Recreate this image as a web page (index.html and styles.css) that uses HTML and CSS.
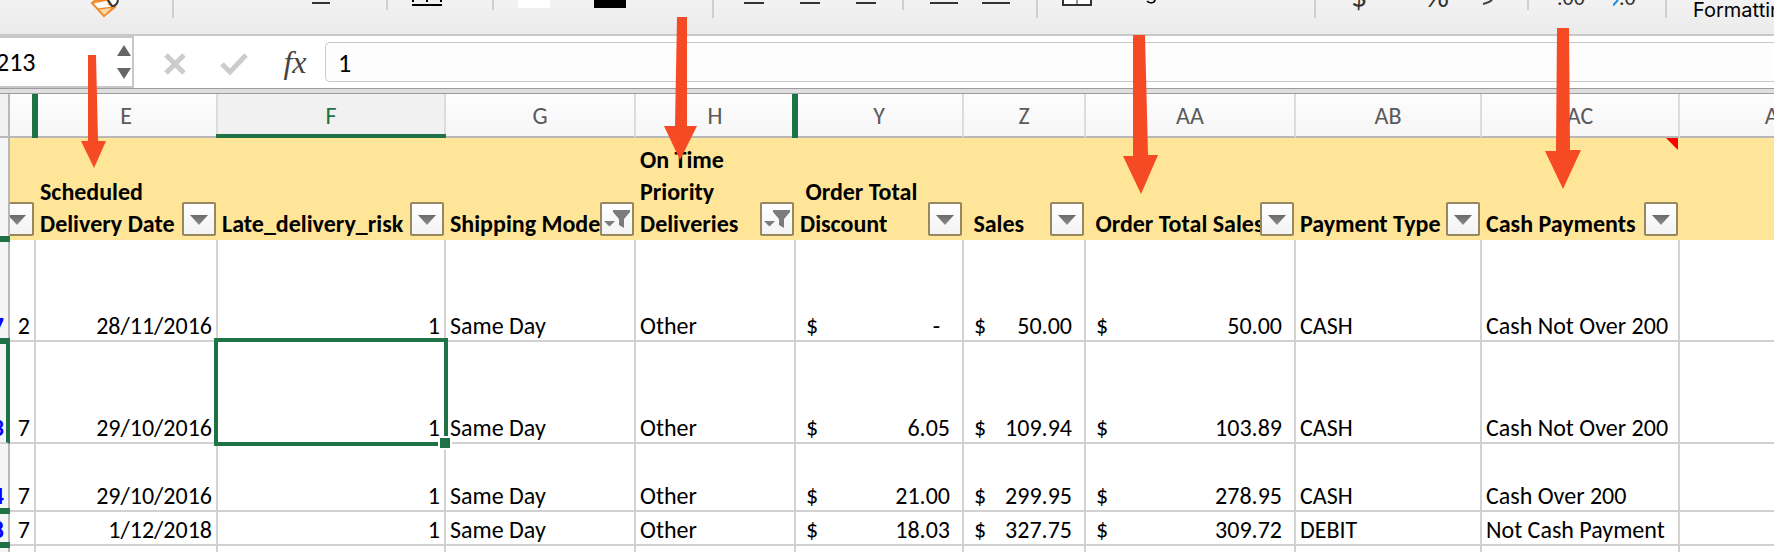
FILE: index.html
```html
<!DOCTYPE html>
<html lang="en">
<head>
<meta charset="utf-8">
<title>Delivery orders</title>
<link rel="stylesheet" href="styles.css">
</head>
<body>
<svg class="defs" aria-hidden="true">
  <defs>
    <linearGradient id="grey" x1="0" y1="0" x2="0" y2="1"><stop offset="0" stop-color="#6a6a6a"/><stop offset="1" stop-color="#8c8c8c"/></linearGradient>
    <symbol id="drop" viewBox="0 0 30 30"><path d="M6 11H24L15 21Z" fill="url(#grey)"/></symbol>
    <symbol id="funnel" viewBox="0 0 30 30"><path d="M2 17H13L7.500 22.500ZM11 6H28V8L22 15V24L17 21V15L11 8Z" fill="#7c7c7c"/></symbol>
  </defs>
</svg>
<div class="app">
  <div class="toolbar" role="toolbar" aria-label="Home">
    <button class="tool brush" aria-label="Format painter"><svg width="30" height="18" viewBox="0 0 30 18"><path d="M2 3L14 16L25 7L17 0H6Z" fill="#fff" stroke="#f08a2c" stroke-width="2"/><path d="M8 9L14 16L24 7Z" fill="#fbd9a0" stroke="#f08a2c" stroke-width="1.500"/><path d="M2 3L17 0L20 6" fill="none" stroke="#f08a2c" stroke-width="1.500"/><path d="M18 0L22 6Q27 6 28 0" fill="#fff" stroke="#333" stroke-width="2"/></svg></button>
    <span class="sep"></span>
    <button class="tool" aria-label="Underline"><span class="line short"></span></button>
    <span class="sep half"></span>
    <button class="tool" aria-label="Borders"><svg width="30" height="6" viewBox="0 0 30 6"><path d="M0 4H30V6H0Z"/><path d="M0 0H2V2H0ZM14 0H16V2H14ZM28 0H30V2H28Z"/></svg></button>
    <span class="sep half"></span>
    <button class="tool swatch fill" aria-label="Fill colour"></button>
    <button class="tool swatch ink" aria-label="Font colour"></button>
    <span class="sep"></span>
    <button class="tool" aria-label="Align left"><span class="line"></span></button>
    <button class="tool" aria-label="Align centre"><span class="line"></span></button>
    <button class="tool" aria-label="Align right"><span class="line"></span></button>
    <span class="sep half"></span>
    <button class="tool" aria-label="Decrease indent"><span class="line long"></span></button>
    <button class="tool" aria-label="Increase indent"><span class="line long"></span></button>
    <span class="sep"></span>
    <button class="tool" aria-label="Merge cells"><svg width="30" height="6" viewBox="0 0 30 6"><path d="M1 0V5H29V0" fill="#fff" stroke="#333" stroke-width="2"/><path d="M15 0V4" stroke="#333"/></svg></button>
    <button class="tool label merge">Merge &amp; Center</button>
    <span class="sep"></span>
    <button class="tool glyph">$</button>
    <button class="tool glyph">%</button>
    <button class="tool" aria-label="Comma style"><svg width="12" height="5" viewBox="0 0 12 5"><path d="M10 0Q8 2 1 4" fill="none" stroke="#444" stroke-width="2"/></svg></button>
    <span class="sep half"></span>
    <button class="tool decimals">.00</button>
    <button class="tool decimals"><svg width="6" height="6" viewBox="0 0 6 6"><path d="M0 5.500L5 0" stroke="#1d8fd8" stroke-width="2"/></svg>.0</button>
    <span class="sep"></span>
    <button class="tool label">Formatting</button>
  </div>

  <div class="formula">
    <div class="namebox">
      <input class="cellname" aria-label="Name box" value="213">
      <span class="steps">
        <button aria-label="Previous"><svg width="14" height="12" viewBox="0 0 14 12"><path d="M0 11L7 0L14 11Z" fill="#666"/></svg></button>
        <button aria-label="Next"><svg width="14" height="12" viewBox="0 0 14 12"><path d="M0 1H14L7 12Z" fill="#666"/></svg></button>
      </span>
    </div>
    <button class="cancel" aria-label="Cancel"><svg width="22" height="22" viewBox="0 0 22 22"><path d="M2 2L20 20M20 2L2 20" stroke="#ccc" stroke-width="5"/></svg></button>
    <button class="enter" aria-label="Enter"><svg width="28" height="22" viewBox="0 0 28 22"><path d="M2 11L10 19L26 2" fill="none" stroke="#ccc" stroke-width="5"/></svg></button>
    <button class="fx" aria-label="Insert function">fx</button>
    <input class="entry" aria-label="Formula" value="1">
  </div>
  <div class="divider"></div>

  <table class="sheet">
    <colgroup><col class="c-n"><col class="c-d"><col class="c-e"><col class="c-f"><col class="c-g"><col class="c-h"><col class="c-y"><col class="c-z"><col class="c-aa"><col class="c-ab"><col class="c-ac"><col class="c-ad"></colgroup>
    <thead>
      <tr class="letters">
        <th class="corner"></th><th class="break"></th><th>E</th><th class="current">F</th><th>G</th><th class="break">H</th><th>Y</th><th>Z</th><th>AA</th><th>AB</th><th>AC</th><th>AD</th>
      </tr>
    </thead>
    <tbody>
      <tr class="titles">
        <th class="num mark"></th>
        <th><div class="clip"><button class="filter" aria-label="Filter D"><svg><use href="#drop"/></svg></button></div></th>
        <th>Scheduled<br>Delivery Date<button class="filter" aria-label="Filter E"><svg><use href="#drop"/></svg></button></th>
        <th>Late_delivery_risk<button class="filter" aria-label="Filter F"><svg><use href="#drop"/></svg></button></th>
        <th>Shipping Mode<button class="filter" aria-label="Filter G"><svg><use href="#funnel"/></svg></button></th>
        <th>On Time<br>Priority<br>Deliveries<button class="filter" aria-label="Filter H"><svg><use href="#funnel"/></svg></button></th>
        <th>&nbsp;Order Total<br>Discount<button class="filter" aria-label="Filter Y"><svg><use href="#drop"/></svg></button></th>
        <th>&nbsp;Sales<button class="filter" aria-label="Filter Z"><svg><use href="#drop"/></svg></button></th>
        <th>&nbsp;Order Total Sales<button class="filter" aria-label="Filter AA"><svg><use href="#drop"/></svg></button></th>
        <th>Payment Type<button class="filter" aria-label="Filter AB"><svg><use href="#drop"/></svg></button></th>
        <th class="noted">Cash Payments<button class="filter" aria-label="Filter AC"><svg><use href="#drop"/></svg></button></th>
        <th></th>
      </tr>
      <tr class="tall">
        <th class="num mark"><span>7</span></th><td class="r">2</td><td class="r">28/11/2016</td><td class="r">1</td><td>Same Day</td><td>Other</td>
        <td><div class="money"><span>$</span><span class="nil">-</span></div></td><td><div class="money"><span>$</span><span>50.00</span></div></td><td><div class="money"><span>$</span><span>50.00</span></div></td><td>CASH</td><td>Cash Not Over 200</td><td></td>
      </tr>
      <tr class="tall">
        <th class="num current"><span>3</span></th><td class="r">7</td><td class="r">29/10/2016</td><td class="r selected">1<i class="frame"></i><i class="handle"></i></td><td>Same Day</td><td>Other</td>
        <td><div class="money"><span>$</span><span>6.05</span></div></td><td><div class="money"><span>$</span><span>109.94</span></div></td><td><div class="money"><span>$</span><span>103.89</span></div></td><td>CASH</td><td>Cash Not Over 200</td><td></td>
      </tr>
      <tr class="medium">
        <th class="num mark"><span>4</span></th><td class="r">7</td><td class="r">29/10/2016</td><td class="r">1</td><td>Same Day</td><td>Other</td>
        <td><div class="money"><span>$</span><span>21.00</span></div></td><td><div class="money"><span>$</span><span>299.95</span></div></td><td><div class="money"><span>$</span><span>278.95</span></div></td><td>CASH</td><td>Cash Over 200</td><td></td>
      </tr>
      <tr>
        <th class="num mark"><span>8</span></th><td class="r">7</td><td class="r">1/12/2018</td><td class="r">1</td><td>Same Day</td><td>Other</td>
        <td><div class="money"><span>$</span><span>18.03</span></div></td><td><div class="money"><span>$</span><span>327.75</span></div></td><td><div class="money"><span>$</span><span>309.72</span></div></td><td>DEBIT</td><td>Not Cash Payment</td><td></td>
      </tr>
      <tr>
        <th class="num"></th><td></td><td></td><td></td><td></td><td></td><td></td><td></td><td></td><td></td><td></td><td></td>
      </tr>
    </tbody>
  </table>

  <svg class="arrows" width="1774" height="552" viewBox="0 0 1774 552" aria-hidden="true">
    <path d="M88 55H96L98 141H106L94 168L81 141H88Z"/>
    <path d="M677 17H687V126H697L680 160L664 126H675Z"/>
    <path d="M1133 35H1145L1148 155H1158L1141 194L1123 156H1133Z"/>
    <path d="M1557 28H1569L1570 150H1581L1563 189L1545 151H1556Z"/>
  </svg>
</div>
</body>
</html>
```

FILE: styles.css
```css
* { box-sizing: border-box; }
body { margin: 0; background: #fff; color: #000; font-family: Carlito, Lato, sans-serif; font-size: 24px; }
button { padding: 0; border: 0; background: none; color: inherit; font: inherit; display: block; }
svg { display: block; }
.defs { position: absolute; width: 0; height: 0; }
.app { position: relative; height: 100vh; overflow: hidden; }

.toolbar {
  display: grid;
  grid-template-columns: 82px 140px 74px 26px 80px 26px 76px 118px 32px 56px 56px 46px 28px 52px 54px 26px 46px 206px 37px 75px 56px 45px 30px 56px 52px 28px 120px;
  align-items: start;
  justify-items: start;
  height: 36px;
  padding-left: 90px;
  overflow: hidden;
  background: linear-gradient(#f2f2f2, #ebebeb);
  border-bottom: 2px solid #c8c8c8;
}
.sep { width: 2px; height: 18px; background: #cfcfcf; }
.sep.half { height: 10px; }
.line { display: block; width: 20px; height: 4px; border-bottom: 2px solid #333; }
.line.short { width: 18px; }
.line.long { width: 28px; }
.swatch { width: 32px; height: 8px; }
.fill { background: #fff; }
.ink { background: #000; }
.label { font-family: Inter, sans-serif; font-size: 20px; line-height: 20px; white-space: nowrap; }
.label.merge { margin-top: -18px; }
.glyph { margin-top: -19px; color: #333; font-size: 32px; line-height: 32px; }
.decimals { display: flex; align-items: flex-end; margin-top: -14px; color: #333; font-size: 22px; line-height: 24px; }
.decimals svg { margin-bottom: 4px; }

.formula { display: flex; align-items: center; height: 52px; background: #fff; }
.divider { height: 6px; border: solid #9c9c9c; border-width: 1px 0; background: #dedede; }
.namebox { display: flex; align-items: center; justify-content: space-between; width: 134px; height: 52px; padding-right: 1px; border: 2px solid #c8c8c8; border-left: 0; }
.cellname { width: 90px; margin-left: -4px; padding: 0; border: 0; background: none; font: inherit; font-size: 26px; }
.steps { display: grid; gap: 10px; }
.cancel { margin-left: 30px; padding-top: 4px; }
.enter { margin-left: 34px; padding-top: 4px; }
.fx { width: 30px; margin-left: 32px; color: #444; font: italic 32px/36px "Liberation Serif", serif; }
.entry { flex: 1; min-width: 0; height: 40px; margin-left: 15px; padding: 2px 12px 0; border: 1px solid #c8c8c8; border-right: 0; border-radius: 5px 0 0 5px; background: #fdfdfd; font: inherit; font-size: 26px; }

.sheet { width: 1880px; table-layout: fixed; border-collapse: separate; border-spacing: 0; line-height: 28px; }
.c-n { width: 10px; }
.c-d { width: 26px; }
.c-e { width: 182px; }
.c-f { width: 228px; }
.c-g { width: 190px; }
.c-h { width: 160px; }
.c-y { width: 168px; }
.c-z { width: 122px; }
.c-aa { width: 210px; }
.c-ab { width: 186px; }
.c-ac { width: 198px; }
.c-ad { width: 200px; }
.sheet th, .sheet td { position: relative; height: 34px; padding: 0 4px; border: solid #d2d2d2; border-width: 0 2px 2px 0; text-align: left; vertical-align: bottom; white-space: nowrap; }
.sheet .tall td, .sheet .tall th { height: 102px; }
.sheet .medium td, .sheet .medium th { height: 68px; }
.sheet .r { text-align: right; }

.sheet .letters th { height: 44px; padding: 2px 0 0; border-color: #dcdcdc; border-bottom-color: #b8b8b8; background: linear-gradient(#fdfdfd, #f6f6f6); color: #5a5a5a; font-weight: 400; text-align: center; vertical-align: middle; }
.sheet .letters .corner { border-right-color: #b8b8b8; background: #f0f0f0; }
.sheet .letters .current { background: #f1f1f1; color: #1f7246; }
.letters .current::after { content: ""; position: absolute; z-index: 1; left: -2px; right: -2px; bottom: -2px; height: 4px; background: #1f7246; }
.letters .break::after { content: ""; position: absolute; z-index: 1; top: 0; right: -4px; bottom: -2px; width: 6px; background: #1f7246; }

.sheet .titles th { height: 102px; border: 0; background: #ffe598; line-height: 32px; }
.clip { position: absolute; inset: 0; overflow: hidden; }
.filter { position: absolute; right: 2px; bottom: 4px; width: 34px; height: 34px; border: 2px solid #96875f; border-radius: 2px; background: linear-gradient(#fff, #f3f3f3); }
.filter svg { width: 30px; height: 30px; }
.noted::before { content: ""; position: absolute; top: 0; right: 2px; border: 6px solid; border-color: #f00 #f00 transparent transparent; }

.sheet .num { padding: 0; border-right-color: #b8b8b8; background: #f5f5f5; color: #00f; }
.sheet .titles .num { border-right: 2px solid #b8b8b8; background: #f5f5f5; }
.num span { display: flex; justify-content: flex-end; width: 4px; }
.mark::after { content: ""; position: absolute; z-index: 1; left: 0; right: -2px; bottom: -4px; height: 6px; background: #1f7246; }
.titles .mark::after { bottom: -2px; }
.sheet .num.current { border-right: 4px solid #1f7246; }

.frame { position: absolute; z-index: 1; inset: -4px; border: 4px solid #1f7246; }
.handle { position: absolute; z-index: 2; right: -8px; bottom: -8px; width: 14px; height: 14px; border: 2px solid #fff; background: #1f7246; }
.money { display: flex; justify-content: space-between; padding: 0 8px 0 6px; }
.nil { padding-right: 10px; }

.arrows { position: absolute; z-index: 3; top: 0; left: 0; fill: #f64a24; pointer-events: none; }
```
